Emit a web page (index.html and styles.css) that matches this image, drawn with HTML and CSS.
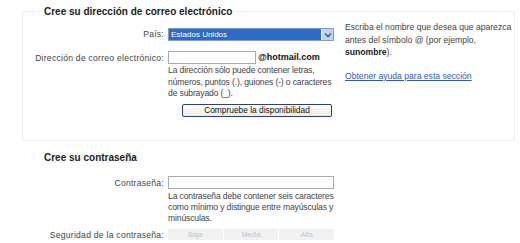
FILE: index.html
```html
<!DOCTYPE html>
<html lang="es">
<head>
<meta charset="utf-8">
<link rel="stylesheet" href="styles.css">
</head>
<body>
<fieldset class="section boxed">
  <legend class="section-title">Cree su dirección de correo electrónico</legend>
  <div class="form">
    <div class="label row-country">País:</div>
    <div class="field row-country">
      <div class="select">
        <span class="select-value">Estados Unidos</span>
        <span class="select-btn"><svg width="8" height="6" viewBox="0 0 8 6"><path d="M1 1.5 L4 4.5 L7 1.5" fill="none" stroke="#4d6185" stroke-width="1.6"/></svg></span>
      </div>
    </div>
    <div class="side">
      <p class="side-text">Escriba el nombre que desea que aparezca antes del símbolo @ (por ejemplo, <b>sunombre</b>).</p>
      <a class="help-link" href="#">Obtener ayuda para esta sección</a>
    </div>
    <div class="label row-email">Dirección de correo electrónico:</div>
    <div class="field row-email">
      <div class="email-line"><span class="input input-short"></span><span class="domain">@hotmail.com</span></div>
      <p class="hint">La dirección sólo puede contener letras,<br>números, puntos (.), guiones (-) o caracteres<br>de subrayado (_).</p>
      <div class="btn-wrap"><span class="button">Compruebe la disponibilidad</span></div>
    </div>
  </div>
</fieldset>

<section class="section plain">
  <h2 class="section-title plain-title">Cree su contraseña</h2>
  <div class="form form2">
    <div class="label row-pass">Contraseña:</div>
    <div class="field row-pass">
      <span class="input input-long"></span>
      <p class="hint">La contraseña debe contener seis caracteres<br>como mínimo y distingue entre mayúsculas y<br>minúsculas.</p>
    </div>
    <div class="label row-strength">Seguridad de la contraseña:</div>
    <div class="field row-strength">
      <div class="strength"><span>Baja</span><span>Media</span><span>Alta</span></div>
    </div>
  </div>
</section>
</body>
</html>
```

FILE: styles.css
```css
html, body {
  margin: 0;
  padding: 0;
  background: #ffffff;
}
body {
  font-family: "Liberation Sans", Arial, sans-serif;
  font-size: 8.6px;
  color: #444444;
  width: 520px;
  height: 243px;
  overflow: hidden;
}
.section-title {
  font-size: 10px;
  font-weight: bold;
  color: #222222;
  margin: 0;
}
.boxed {
  margin: 6px 5px 0 22px;
  padding: 0 0 23px 0;
  border: 1px solid #efefef;
  min-width: 0;
}
.boxed legend {
  margin-left: 17px;
  padding: 0 4px;
}
.form {
  display: grid;
  grid-template-columns: 141px 166px 181px;
  column-gap: 4px;
  align-items: start;
}
.form > .side {
  grid-column: 3;
  grid-row: 1 / span 2;
  padding-left: 7px;
  padding-top: 4px;
}
.row-country { grid-row: 1; }
.row-email { grid-row: 2; }
.label {
  grid-column: 1;
  text-align: right;
  color: #444444;
  line-height: 12px;
  letter-spacing: 0.25px;
}
.field { grid-column: 2; }
.label.row-country { margin-top: 11px; }
.field.row-country { margin-top: 11px; }
.field.row-email { margin-top: 9px; }
.label.row-email { margin-top: 11px; }

.select {
  display: flex;
  height: 11px;
  border: 1px solid #7f9db9;
  background: #316ac5;
}
.select-value {
  flex: 1;
  color: #ffffff;
  line-height: 11px;
  padding-left: 2px;
  font-size: 8px;
}
.select-btn {
  width: 11px;
  background: #c1d3fb;
  border-left: 1px solid #ffffff;
  display: flex;
  align-items: center;
  justify-content: center;
}
.side-text {
  margin: 0;
  line-height: 12.5px;
  color: #444444;
}
.side-text b { color: #222222; }
.help-link {
  display: block;
  margin-top: 11px;
  color: #1f5bd4;
  text-decoration: underline;
  line-height: 12px;
}
.email-line {
  display: flex;
  align-items: center;
  height: 14px;
}
.input {
  display: block;
  height: 11px;
  border: 1px solid #a5acb2;
  background: #ffffff;
}
.input-short { width: 86px; }
.input-long { width: 164px; }
.domain {
  font-weight: bold;
  font-size: 9px;
  color: #111111;
  margin-left: 2px;
}
.hint {
  margin: 1px 0 0 0;
  line-height: 11.5px;
  color: #444444;
  width: 190px;
  white-space: nowrap;
  letter-spacing: -0.15px;
}
.btn-wrap {
  margin-top: 4px;
  padding-left: 14px;
}
.button {
  display: block;
  width: 148px;
  height: 11px;
  line-height: 11px;
  text-align: center;
  border: 1px solid #25418a;
  border-radius: 2px;
  background: linear-gradient(#ffffff, #ecebe6);
  color: #111111;
  font-size: 8.4px;
}
.plain {
  margin: 11px 0 0 0;
}
.plain-title {
  margin-left: 44px;
  line-height: 12px;
}
.row-pass { grid-row: 1; }
.row-strength { grid-row: 2; }
.label.row-pass { margin-top: 13px; }
.field.row-pass { margin-top: 12px; }
.field.row-pass .hint { margin-top: 2px; line-height: 11px; }
.label.row-strength { margin-top: 5px; }
.field.row-strength { margin-top: 5px; }
.form2 { margin-left: 23px; }
.strength {
  display: grid;
  grid-template-columns: 1fr 1fr 1fr;
  column-gap: 1px;
  width: 166px;
  height: 11px;
}
.strength span {
  background: #f1f1f1;
  color: #c4c4c4;
  text-align: center;
  line-height: 11px;
  font-size: 7px;
}
```
